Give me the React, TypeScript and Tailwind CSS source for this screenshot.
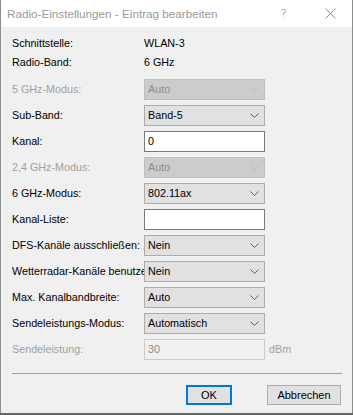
import React from "react"

const Chevron = ({ disabled }: { disabled?: boolean }) => (
    <svg width="9" height="5" viewBox="0 0 9 5" className="shrink-0">
        <path d="M0.5 0.5 L4.5 4.5 L8.5 0.5" fill="none" stroke={disabled ? "#bcbcbc" : "#606060"} strokeWidth="1" />
    </svg>
)

const Combo = ({ value, disabled }: { value: string; disabled?: boolean }) => (
    <div
        className={
            disabled
                ? "flex items-center justify-between w-[121px] h-[21px] pl-[3px] pr-[5px] border border-[#bfbfbf] bg-[#cccccc] text-[#8d8d8d]"
                : "flex items-center justify-between w-[121px] h-[21px] pl-[3px] pr-[5px] border border-[#adadad] bg-[#e1e1e1] text-black"
        }
    >
        <span>{value}</span>
        <Chevron disabled={disabled} />
    </div>
)

const Input = ({ value, disabled }: { value: string; disabled?: boolean }) => (
    <div
        className={
            disabled
                ? "flex items-center w-[121px] h-[21px] pl-[3px] border border-[#cccccc] bg-[#f0f0f0] text-[#8d8d8d]"
                : "flex items-center w-[121px] h-[21px] pl-[3px] border border-[#7a7a7a] bg-white text-black"
        }
    >
        {value}
    </div>
)

interface Row {
    label: string
    kind: "combo" | "input"
    value: string
    disabled?: boolean
    unit?: string
}

const rows: Row[] = [
    { label: "5 GHz-Modus:", kind: "combo", value: "Auto", disabled: true },
    { label: "Sub-Band:", kind: "combo", value: "Band-5" },
    { label: "Kanal:", kind: "input", value: "0" },
    { label: "2,4 GHz-Modus:", kind: "combo", value: "Auto", disabled: true },
    { label: "6 GHz-Modus:", kind: "combo", value: "802.11ax" },
    { label: "Kanal-Liste:", kind: "input", value: "" },
    { label: "DFS-Kanäle ausschließen:", kind: "combo", value: "Nein" },
    { label: "Wetterradar-Kanäle benutzen:", kind: "combo", value: "Nein" },
    { label: "Max. Kanalbandbreite:", kind: "combo", value: "Auto" },
    { label: "Sendeleistungs-Modus:", kind: "combo", value: "Automatisch" },
    { label: "Sendeleistung:", kind: "input", value: "30", disabled: true, unit: "dBm" },
]

export default function App() {
    return (
        <div className="w-[353px] h-[415px] bg-[#5d6b62] font-['Liberation_Sans',Arial,sans-serif]">
            <div className="flex flex-col w-[353px] h-[413px] border-x border-[#8a8f8c] bg-[#f0f0f0]">
                {/* title bar */}
                <div className="flex items-center h-[27px] bg-white shrink-0">
                    <span className="pl-[6px] text-[11.7px] text-[#999999]">Radio-Einstellungen - Eintrag bearbeiten</span>
                    <span className="ml-auto mr-[38px] text-[13px] text-[#8a8a8a] font-['DejaVu_Sans',sans-serif] font-extralight">?</span>
                    <svg width="11" height="11" viewBox="0 0 11 11" className="mr-[16px]">
                        <path d="M0.5 0.5 L10.5 10.5 M10.5 0.5 L0.5 10.5" stroke="#8a8a8a" strokeWidth="1" />
                    </svg>
                </div>

                <div className="flex flex-col pl-[11px] pt-[7px] text-[10.75px] text-black">
                    <div className="flex items-center h-[19px]">
                        <span className="w-[132px]">Schnittstelle:</span>
                        <span>WLAN-3</span>
                    </div>
                    <div className="flex items-center h-[19px]">
                        <span className="w-[132px]">Radio-Band:</span>
                        <span>6 GHz</span>
                    </div>

                    <div className="flex flex-col gap-[5px] mt-[7px]">
                        {rows.map((row) => (
                            <div key={row.label} className="flex items-center h-[21px]">
                                <span
                                    className={
                                        row.disabled
                                            ? "w-[132px] shrink-0 overflow-hidden whitespace-nowrap text-[#a0a0a0]"
                                            : "w-[132px] shrink-0 overflow-hidden whitespace-nowrap"
                                    }
                                >
                                    {row.label}
                                </span>
                                {row.kind === "combo" ? (
                                    <Combo value={row.value} disabled={row.disabled} />
                                ) : (
                                    <Input value={row.value} disabled={row.disabled} />
                                )}
                                {row.unit && <span className="ml-[4px] text-[#a0a0a0]">{row.unit}</span>}
                            </div>
                        ))}
                    </div>

                    <div className="mt-[13px] mr-[10px] h-px bg-[#a0a0a0]" />

                    <div className="flex justify-end gap-[35px] mt-[11px] mr-[11px]">
                        <button className="w-[46px] h-[20px] border-2 border-[#0078d7] bg-[#e1e1e1] text-[11px] text-black">OK</button>
                        <button className="w-[74px] h-[20px] border border-[#adadad] bg-[#e1e1e1] text-[11px] text-black">Abbrechen</button>
                    </div>
                </div>
            </div>
        </div>
    )
}
